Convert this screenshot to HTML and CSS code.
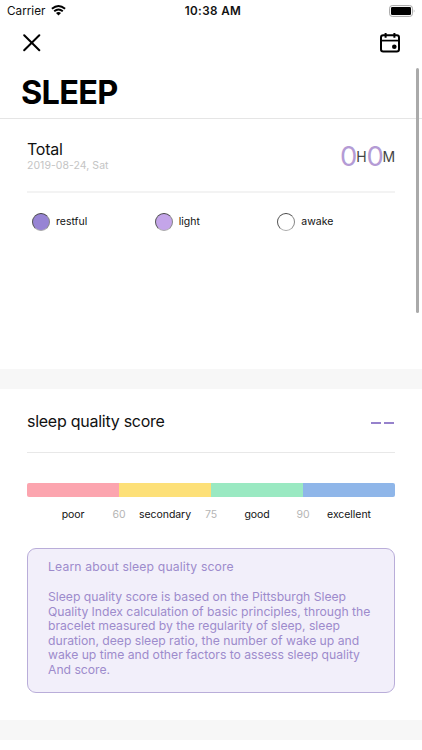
FILE: index.html
```
<!DOCTYPE html>
<html lang="en">
<head>
<meta charset="utf-8">
<title>Sleep</title>
<link rel="stylesheet" href="styles.css">
</head>
<body>
<header class="header">
  <div class="status">
    <div class="carrier"><span>Carrier</span>
      <svg class="wifi" width="15" height="11" viewBox="0 0 15 11"><path d="M.9 3.8Q7.5-1.8 14.1 3.8M3.2 6.2Q7.5 2.6 11.8 6.2" fill="none" stroke="#000" stroke-width="1.9"/><path d="M5 7.9Q7.5 6 10 7.9L7.5 10.5Z"/></svg>
    </div>
    <span class="time">10:38 AM</span>
    <svg class="battery" width="27" height="12" viewBox="0 0 27 12"><rect x=".6" y=".6" width="22.8" height="10.8" rx="2.6" fill="#fff" stroke="#a5a5a5"/><rect x="2" y="2" width="20" height="8" rx="1.2"/><path d="M24.8 4.2Q26.3 6 24.8 7.8Z" fill="#a5a5a5"/></svg>
  </div>
  <nav class="nav">
    <svg width="18" height="18" viewBox="0 0 18 18"><path d="M1.2 1.2 16.3 16.3M16.3 1.2 1.2 16.3" stroke="#000" stroke-width="2" stroke-linecap="round"/></svg>
    <svg width="20" height="20" viewBox="0 0 20 20"><rect x="1" y="2.2" width="18" height="16.3" rx="2.2" fill="none" stroke="#000" stroke-width="2"/><path d="M1 7.6H19" stroke="#000" stroke-width="1.7"/><path d="M5.6 0V4.8M14.4 0V4.8" stroke="#000" stroke-width="2"/><circle cx="14.3" cy="13.7" r="2.3"/></svg>
  </nav>
  <h1 class="title">SLEEP</h1>
</header>
<main>
  <section class="panel total">
    <div class="row total-row">
      <div>
        <h2 class="heading total-heading">Total</h2>
        <p class="date">2019-08-24, Sat</p>
      </div>
      <div class="duration"><span class="number">0</span><span class="unit">H</span><span class="number">0</span><span class="unit">M</span></div>
    </div>
    <div class="legend">
      <div class="legend-item"><i class="dot restful"></i>restful</div>
      <div class="legend-item"><i class="dot light"></i>light</div>
      <div class="legend-item"><i class="dot awake"></i>awake</div>
    </div>
  </section>
  <section class="panel quality">
    <div class="row quality-row">
      <h2 class="heading">sleep quality score</h2>
      <div class="empty-score"><i></i><i></i></div>
    </div>
    <div class="scale"><i class="poor"></i><i class="secondary"></i><i class="good"></i><i class="excellent"></i></div>
    <div class="labels"><span class="level">poor</span><span class="limit">60</span><span class="level">secondary</span><span class="limit">75</span><span class="level">good</span><span class="limit">90</span><span class="level">excellent</span></div>
    <article class="info">
      <h3>Learn about sleep quality score</h3>
      <p>Sleep quality score is based on the Pittsburgh Sleep<br>Quality Index calculation of basic principles, through the<br>bracelet measured by the regularity of sleep, sleep<br>duration, deep sleep ratio, the number of wake up and<br>wake up time and other factors to assess sleep quality<br>And score.</p>
    </article>
  </section>
</main>
<div class="scrollbar"></div>
</body>
</html>
```
FILE: styles.css
```
* { box-sizing: border-box; }
body, h1, h2, h3, p { margin: 0; font-weight: 400; }
body { width: 422px; height: 750px; overflow: hidden; background: #fff; color: #111; font-family: Inter, sans-serif; }
svg { display: block; flex: none; }
.header { height: 119px; border-bottom: 1px solid #e5e5e5; }
.status { display: grid; grid-template-columns: 1fr auto 1fr; align-items: center; height: 22px; padding: 0 6px 0 7px; }
.carrier { display: flex; align-items: center; gap: 6px; font-size: 11.7px; letter-spacing: .02px; }
.wifi { margin-top: -1px; }
.time { font-size: 11.7px; font-weight: 600; letter-spacing: .38px; margin-left: 3px; }
.battery { justify-self: end; margin-top: -1px; }
.nav { display: flex; justify-content: space-between; align-items: center; height: 42px; padding: 0 22px 0 23px; }
.title { margin: 9px 0 0 21px; font-size: 32.5px; line-height: 40px; font-weight: 700; letter-spacing: -.75px; color: #000; }
.panel { padding: 0 27px; border-bottom: 20px solid #f7f7f7; }
.total { height: 270px; }
.row { display: flex; justify-content: space-between; border-bottom: 2px solid #f3f3f3; }
.total-row { height: 74px; padding-top: 20px; }
.heading { font-size: 16px; line-height: 20px; letter-spacing: -.26px; }
.date { font-size: 10.5px; line-height: 13px; letter-spacing: .04px; color: #c4c4c4; }
.duration { display: flex; align-items: center; height: 34px; line-height: 34px; }
.number { color: #b49bd5; font-size: 27.5px; font-weight: 400; letter-spacing: -1.2px; }
.unit { margin-top: 1px; color: #444; font-size: 14px; letter-spacing: -.2px; }
.legend { display: grid; grid-template-columns: repeat(3, 1fr); padding: 19px 0 0 5px; margin-right: -5px; }
.legend-item { display: flex; align-items: center; gap: 6px; height: 19px; font-size: 10.5px; letter-spacing: 0; }
.dot { width: 18px; height: 18px; border: 1px solid; border-color: #444 #888 #aaa #555; border-radius: 50%; }
.restful { background: #9784d4; }
.light { background: #c4a5e9; }
.quality { height: 351px; }
.quality-row { height: 64px; padding-top: 22px; border-bottom-width: 1px; border-color: #e8e8e8; }
.empty-score { display: flex; gap: 3px; padding: 11px 2px 0 0; margin-right: -1px; }
.empty-score i { width: 10px; height: 2px; background: #9682cc; }
.scale { display: flex; height: 14px; margin-top: 30px; border-radius: 2px; overflow: hidden; }
.scale i { flex: 1; }
.poor { background: #fca5af; }
.secondary { background: #fde078; }
.good { background: #9ae9c2; }
.excellent { background: #8fb6e9; }
.labels { display: flex; justify-content: space-between; height: 14px; margin-top: 11px; font-size: 10.5px; line-height: 14px; letter-spacing: -.06px; text-align: center; }
.level { width: 72px; white-space: nowrap; }
.level:first-child, .level:last-child { width: 92px; }
.limit { width: 20px; color: #b5b5b5; }
.level:first-child + .limit { margin-left: -10px; }
.labels .limit:nth-last-child(2) { margin-right: -10px; }
.info { height: 145px; margin-top: 26px; padding: 9px 20px 0; border: 1px solid #b9add9; border-radius: 9px; background: #f2effa; color: #9d8bcc; font-size: 12.2px; line-height: 14.6px; letter-spacing: -.02px; }
.info h3 { font-size: inherit; line-height: 17px; letter-spacing: .15px; margin-bottom: 15px; }
.info p { white-space: nowrap; }
.scrollbar { position: absolute; top: 68px; right: 3px; width: 3px; height: 245px; border-radius: 2px; background: #aaa; }
```
